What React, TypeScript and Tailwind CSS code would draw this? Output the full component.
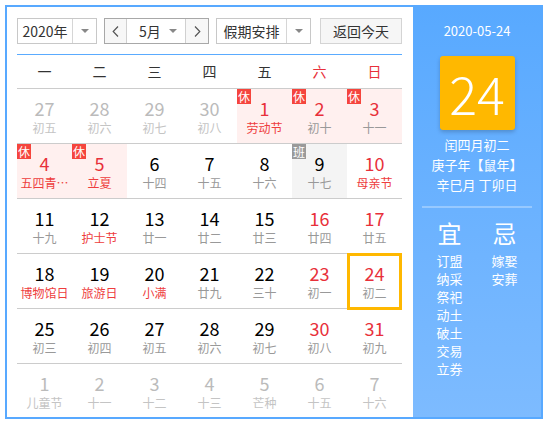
import React from "react";

type Day = {
  n: number;
  l: string;
  other?: boolean;
  red?: boolean;
  fest?: boolean;
  tag?: "休" | "班";
  sel?: boolean;
};

const rows: Day[][] = [
  [
    { n: 27, l: "初五", other: true },
    { n: 28, l: "初六", other: true },
    { n: 29, l: "初七", other: true },
    { n: 30, l: "初八", other: true },
    { n: 1, l: "劳动节", red: true, fest: true, tag: "休" },
    { n: 2, l: "初十", red: true, tag: "休" },
    { n: 3, l: "十一", red: true, tag: "休" },
  ],
  [
    { n: 4, l: "五四青…", red: true, fest: true, tag: "休" },
    { n: 5, l: "立夏", red: true, fest: true, tag: "休" },
    { n: 6, l: "十四" },
    { n: 7, l: "十五" },
    { n: 8, l: "十六" },
    { n: 9, l: "十七", tag: "班" },
    { n: 10, l: "母亲节", red: true, fest: true },
  ],
  [
    { n: 11, l: "十九" },
    { n: 12, l: "护士节", fest: true },
    { n: 13, l: "廿一" },
    { n: 14, l: "廿二" },
    { n: 15, l: "廿三" },
    { n: 16, l: "廿四", red: true },
    { n: 17, l: "廿五", red: true },
  ],
  [
    { n: 18, l: "博物馆日", fest: true },
    { n: 19, l: "旅游日", fest: true },
    { n: 20, l: "小满", fest: true },
    { n: 21, l: "廿九" },
    { n: 22, l: "三十" },
    { n: 23, l: "初一", red: true },
    { n: 24, l: "初二", red: true, sel: true },
  ],
  [
    { n: 25, l: "初三" },
    { n: 26, l: "初四" },
    { n: 27, l: "初五" },
    { n: 28, l: "初六" },
    { n: 29, l: "初七" },
    { n: 30, l: "初八", red: true },
    { n: 31, l: "初九", red: true },
  ],
  [
    { n: 1, l: "儿童节", other: true },
    { n: 2, l: "十一", other: true },
    { n: 3, l: "十二", other: true },
    { n: 4, l: "十三", other: true },
    { n: 5, l: "芒种", other: true },
    { n: 6, l: "十五", other: true },
    { n: 7, l: "十六", other: true },
  ],
];

const weekdays = ["一", "二", "三", "四", "五", "六", "日"];

function Caret() {
  return (
    <span className="block h-0 w-0 border-x-[4px] border-t-[4px] border-x-transparent border-t-[#888]" />
  );
}

function Cell({ d }: { d: Day }) {
  let bg = "";
  if (d.tag === "休") bg = "bg-[#fff0ef]";
  if (d.tag === "班") bg = "bg-[#f4f4f4]";
  const numColor = d.other ? "text-[#bbbbbb]" : d.red ? "text-[#e8303a]" : "text-black";
  const lunarColor = d.other
    ? "text-[#c4c4c4]"
    : d.fest
    ? "text-[#ee3d3d]"
    : "text-[#999999]";
  return (
    <div className={`relative h-[54px] text-center ${bg}`}>
      {d.tag && (
        <span
          className={`absolute left-0 top-0 h-[15px] w-[14px] text-[12px] leading-[15px] text-white ${
            d.tag === "休" ? "bg-[#f5453d]" : "bg-[#9a9a9a]"
          }`}
        >
          {d.tag}
        </span>
      )}
      <div className={`pt-[9px] text-[18px] leading-[20px] ${numColor}`}>{d.n}</div>
      <div className={`truncate text-[12px] leading-[20px] ${lunarColor}`}>{d.l}</div>
      {d.sel && (
        <div className="absolute inset-x-0 -top-px bottom-[-2px] border-[3px] border-[#ffb800]" />
      )}
    </div>
  );
}

export default function App() {
  return (
    <div
      className="ml-[5px] mt-[5px] flex h-[414px] w-[538px] border-2 border-[#58a9ff] bg-white text-[#333]"
      style={{ fontFamily: '"Noto Sans CJK SC", "Liberation Sans", sans-serif' }}
    >
      {/* calendar */}
      <div className="w-[406px] pl-[10px] pt-[11px]">
        <div className="flex h-[26px] items-stretch text-[14px]">
          <div className="flex w-[80px] border border-[#c8c8c8]">
            <span className="flex w-[55px] items-center justify-center border-r border-[#d6d6d6]">
              2020年
            </span>
            <span className="flex flex-1 items-center justify-center">
              <Caret />
            </span>
          </div>
          <div className="ml-[7px] flex w-[105px] border border-[#a8a8a8]">
            <span className="flex w-[22px] items-center justify-center border-r border-[#d0d0d0] bg-[#f7f7f7] text-[#555]">
              <svg width="7" height="11" viewBox="0 0 7 11" fill="none" stroke="#555" strokeWidth="1.2">
                <path d="M6 0.5 1.2 5.5 6 10.5" />
              </svg>
            </span>
            <span className="flex flex-1 items-center justify-between pl-[12px] pr-[8px]">
              <span>5月</span>
              <Caret />
            </span>
            <span className="flex w-[23px] items-center justify-center border-l border-[#d0d0d0] bg-[#f7f7f7]">
              <svg width="7" height="11" viewBox="0 0 7 11" fill="none" stroke="#555" strokeWidth="1.2">
                <path d="M1 0.5 5.8 5.5 1 10.5" />
              </svg>
            </span>
          </div>
          <div className="ml-[7px] flex w-[95px] border border-[#c8c8c8]">
            <span className="flex w-[70px] items-center justify-center border-r border-[#d6d6d6]">
              假期安排
            </span>
            <span className="flex flex-1 items-center justify-center">
              <Caret />
            </span>
          </div>
          <div className="ml-[9px] flex w-[82px] items-center justify-center border border-[#d4d4d4] bg-[#f6f6f6]">
            返回今天
          </div>
        </div>

        <div className="mt-[10px] w-[385px] border-t border-[#5aabff]">
          <div className="grid h-[34px] grid-cols-7 items-center border-b border-[#cccccc] text-center text-[14px]">
            {weekdays.map((w, i) => (
              <span key={w} className={i >= 5 ? "text-[#e8303a]" : "text-[#333]"}>
                {w}
              </span>
            ))}
          </div>
          {rows.map((r, i) => (
            <div
              key={i}
              className={`grid grid-cols-7 ${i < rows.length - 1 ? "border-b border-[#cccccc]" : ""}`}
            >
              {r.map((d, j) => (
                <Cell key={j} d={d} />
              ))}
            </div>
          ))}
        </div>
      </div>

      {/* side panel */}
      <div className="flex flex-1 flex-col items-center bg-gradient-to-b from-[#58a9ff] to-[#7dbbff] text-white">
        <div className="mt-[14px] text-[13px] leading-[20px]">2020-05-24</div>
        <div className="mt-[15px] flex h-[74px] w-[75px] items-center justify-center rounded-[3px] bg-[#ffb800] text-[52px] font-light leading-none shadow-[0_2px_4px_rgba(0,0,0,0.2)]">
          24
        </div>
        <div className="mt-[5px] text-center text-[13px] leading-[20px]">
          <div>闰四月初二</div>
          <div>庚子年【鼠年】</div>
          <div>辛巳月 丁卯日</div>
        </div>
        <div className="mt-[11px] h-[2px] w-[110px] bg-white/30" />
        <div className="mt-[10px] flex gap-[15px]">
          <div className="flex w-[40px] flex-col items-center">
            <div className="text-[24px] leading-[30px]">宜</div>
            <div className="mt-[4px] text-center text-[13px] leading-[18px]">
              {["订盟", "纳采", "祭祀", "动土", "破土", "交易", "立券"].map((t) => (
                <div key={t}>{t}</div>
              ))}
            </div>
          </div>
          <div className="flex w-[40px] flex-col items-center">
            <div className="text-[24px] leading-[30px]">忌</div>
            <div className="mt-[4px] text-center text-[13px] leading-[18px]">
              {["嫁娶", "安葬"].map((t) => (
                <div key={t}>{t}</div>
              ))}
            </div>
          </div>
        </div>
      </div>
    </div>
  );
}
